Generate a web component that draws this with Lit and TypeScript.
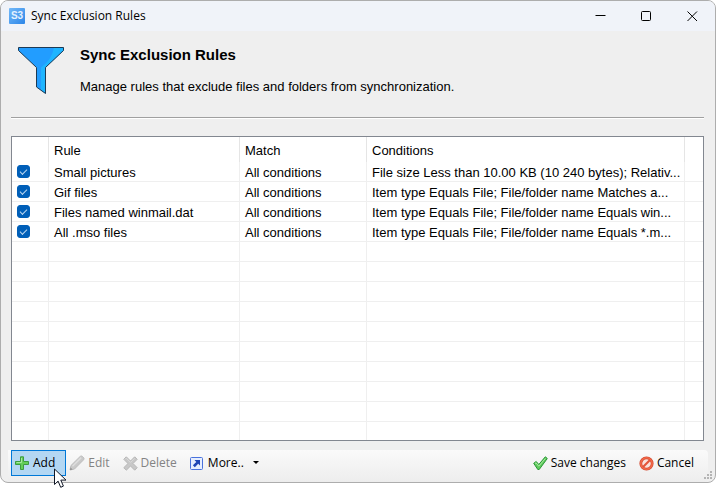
import { LitElement, html, css, svg } from "lit";
import { customElement, state } from "lit/decorators.js";

interface Rule {
  enabled: boolean;
  name: string;
  match: string;
  conditions: string;
}

const EMPTY_ROWS = 10;

const icons = {
  add: svg`<path d="M5.500 .8h3v4.700h5v3h-5v5h-3v-5h-5v-3h5z" fill="#63cf58" stroke="#3d9c40" stroke-linejoin="round"/><path d="M6.500 2v4.500H1.500" fill="none" stroke="#a5e89b"/>`,
  edit: svg`<path d="M1 15l1-4.500L11.200 1.400q1-.9 2.200 0l1.200 1.200q.9 1.200 0 2.200L5.500 14z" fill="#c9c9c9" stroke="#bcbcbc"/><path d="M3.500 11.200L12.200 2.600" stroke="#dedede" stroke-width="1.500"/><path d="M1 15l.6-2.500 1.900 1.900z" fill="#8d8d8d"/>`,
  remove: svg`<path d="M3.300 .8L7.500 5 11.700 .8l2.500 2.500-4.200 4.200 4.200 4.200-2.500 2.500L7.500 10l-4.200 4.200L.8 11.700 5 7.500 .8 3.300z" fill="#c8c8c8" stroke="#b6b6b6"/><path d="M2.200 3.300l1.100-1.100 4.200 4.200 4.200-4.200" fill="none" stroke="#dadada"/>`,
  more: svg`<rect x=".5" y=".5" width="12" height="12" rx="1" fill="#e6eefe" stroke="#4a72dc"/><path d="M4.500 3H10v5.500L8.200 6.800 4.800 10.200 2.900 8.300 6.300 4.900z" fill="#1f46b5"/>`,
  save: svg`<path d="M.7 7.300l2.500-1.800 2.600 3L12.300.8l2 1.700L6.200 13.500 4.800 13.500z" fill="#5fca5c" stroke="#2a9636"/><path d="M2 7.500l1-.7 2.800 3.400 6.600-7.800" fill="none" stroke="#a9eca0"/>`,
  cancel: svg`<circle cx="7.500" cy="7.500" r="5.700" fill="#fbe3dc" stroke="#d2492f" stroke-width="2.800"/><circle cx="7.500" cy="7.500" r="5.700" fill="none" stroke="#f2694a" stroke-width="1.600"/><path d="M4 11L11 4" stroke="#e4553a" stroke-width="2.200"/>`,
};

@customElement("app-root")
export class AppRoot extends LitElement {
  @state() private rules: Rule[] = [
    { enabled: true, name: "Small pictures", match: "All conditions", conditions: "File size Less than 10.00 KB (10 240 bytes); Relativ..." },
    { enabled: true, name: "Gif files", match: "All conditions", conditions: "Item type Equals File; File/folder name Matches a..." },
    { enabled: true, name: "Files named winmail.dat", match: "All conditions", conditions: "Item type Equals File; File/folder name Equals win..." },
    { enabled: true, name: "All .mso files", match: "All conditions", conditions: "Item type Equals File; File/folder name Equals *.m..." },
  ];

  static styles = css`
    :host {
      display: block;
      font: 13px/16px "Liberation Sans", Arial, sans-serif;
      color: #000;
      background: #fff;
    }
    * { box-sizing: border-box; }
    svg { display: block; flex: none; }
    button {
      appearance: none;
      margin: 0;
      padding: 0;
      border: 0;
      background: none;
      color: inherit;
      font: inherit;
    }
    .window {
      position: relative;
      border: 1px solid #adadad;
      border-radius: 8px;
      background: #efefef;
      overflow: hidden;
    }
    .ui { font: 12px/16px "Segoe UI", "Open Sans", "Noto Sans", sans-serif; }
    .titlebar {
      display: flex;
      align-items: center;
      height: 30px;
      padding-left: 8px;
      background: #f0f3f9;
    }
    .title { flex: 1; margin-left: 6px; }
    .caption {
      display: grid;
      place-items: center;
      width: 46px;
      height: 30px;
    }
    .header {
      display: flex;
      gap: 16px;
      margin: 0 11px 0 10px;
      padding: 16px 0 22px 7px;
      border-bottom: 1px solid #a0a0a0;
      box-shadow: 0 1px #fff;
    }
    h1 { margin: 0 0 16px; font-size: 15px; line-height: 16px; }
    p { margin: 0; }
    .list {
      margin: 18px 11px 0 10px;
      border: 1px solid #828790;
      background: #fff;
    }
    table {
      width: 100%;
      table-layout: fixed;
      border-collapse: separate;
      border-spacing: 0;
    }
    .c-check { width: 37px; }
    .c-rule { width: 191px; }
    .c-match { width: 127px; }
    .c-rest { width: 18px; }
    th, td {
      height: 20px;
      padding: 2px 0 0 5px;
      border-right: 1px solid #efefef;
      border-bottom: 1px solid #efefef;
      text-align: left;
      font-weight: normal;
      overflow: hidden;
      white-space: nowrap;
      text-overflow: ellipsis;
    }
    th { height: 25px; border-bottom: 0; border-right-color: #e5e5e5; }
    td:first-child { padding-top: 0; }
    th:last-child, td:last-child { border-right: 0; }
    tr:last-child td { height: 18px; border-bottom: 0; }
    input {
      appearance: none;
      display: grid;
      place-items: center;
      width: 13px;
      height: 13px;
      margin: 0;
      border: 1px solid #868686;
      border-radius: 3px;
    }
    input:checked { border-color: #005fb8; background: #005fb8; }
    input:checked::after {
      content: "";
      width: 6px;
      height: 3px;
      margin-bottom: 2px;
      border: solid #b9d6f0;
      border-width: 0 0 1px 1px;
      transform: rotate(-45deg);
    }
    .toolbar {
      display: flex;
      align-items: flex-start;
      height: 32px;
      margin: 9px 7px 0;
      padding: 0 4px 0 3px;
      border-radius: 0 4px 4px 0;
      background: linear-gradient(#fafafa, #ededed);
    }
    .tool {
      display: flex;
      align-items: center;
      gap: 3px;
      height: 26px;
      padding: 0 9px 0 2px;
      border: 1px solid transparent;
      white-space: nowrap;
    }
    .tool:disabled { color: #838383; }
    .hot { padding: 0 10px 0 3px; border-color: #0078d7; background: #b3d7f3; }
    .menu { gap: 5px; }
    .arrow { margin-left: 4px; }
    .spacer { flex: 1; }
    .grip { position: absolute; right: 1px; bottom: 1px; }
    .pointer { position: absolute; left: 54px; top: 468px; }
  `;

  private toggle(index: number, event: Event) {
    const enabled = (event.target as HTMLInputElement).checked;
    this.rules = this.rules.map((r, i) => (i === index ? { ...r, enabled } : r));
  }

  private icon(name: keyof typeof icons, size = 15) {
    return html`<svg width=${size} height=${size} viewBox="0 0 ${size} ${size}" aria-hidden="true">${icons[name]}</svg>`;
  }

  render() {
    return html`
      <main class="window">
        <div class="titlebar ui">
          <svg width="16" height="16" viewBox="0 0 16 16" aria-hidden="true">
            <defs><linearGradient id="logo" x1="0" y1="0" x2="1" y2="1"><stop stop-color="#72b8f8" /><stop offset="1" stop-color="#2c86e8" /></linearGradient></defs>
            <rect width="16" height="16" rx="1" fill="url(#logo)" />
            <text x="8" y="11" text-anchor="middle" font-family="Liberation Sans" font-weight="bold" font-size="10" fill="#e4f1ff">S3</text>
          </svg>
          <span class="title">Sync Exclusion Rules</span>
          <button class="caption" aria-label="Minimize"><svg width="11" height="11"><path d="M.5 4.500h10" stroke="#000" /></svg></button>
          <button class="caption" aria-label="Maximize"><svg width="11" height="11"><rect x=".5" y=".5" width="9" height="9" rx="1" fill="none" stroke="#000" /></svg></button>
          <button class="caption" aria-label="Close"><svg width="11" height="11"><path d="M.5 .5l9.500 9.500M10 .5L.5 10" stroke="#000" /></svg></button>
        </div>

        <header class="header">
          <svg width="46" height="48" viewBox="0 0 46 48" aria-hidden="true">
            <path d="M.5 .5h45v3L27.500 20.500v26L18.500 40V20.500L.5 3.500z" fill="#229dff" />
            <path d="M36 .5h9.500v3L27.500 20.500v26L23 43V20.500q11-8 13-20z" fill="#1fb5ff" />
            <path d="M.5 .5h45v3L27.500 20.500v26L18.500 40V20.500L.5 3.500z" fill="none" stroke="#1c3a55" />
          </svg>
          <div>
            <h1>Sync Exclusion Rules</h1>
            <p>Manage rules that exclude files and folders from synchronization.</p>
          </div>
        </header>

        <div class="list">
          <table>
            <colgroup><col class="c-check" /><col class="c-rule" /><col class="c-match" /><col /><col class="c-rest" /></colgroup>
            <thead><tr><th></th><th>Rule</th><th>Match</th><th>Conditions</th><th></th></tr></thead>
            <tbody>
              ${this.rules.map((r, i) => html`
                <tr>
                  <td><input type="checkbox" id="rule-${i}" .checked=${r.enabled} @change=${(e: Event) => this.toggle(i, e)} /></td>
                  <td><label for="rule-${i}">${r.name}</label></td>
                  <td>${r.match}</td>
                  <td>${r.conditions}</td>
                  <td></td>
                </tr>`)}
              ${Array.from({ length: EMPTY_ROWS }, () => html`<tr><td></td><td></td><td></td><td></td><td></td></tr>`)}
            </tbody>
          </table>
        </div>

        <div class="toolbar ui">
          <button class="tool hot">${this.icon("add")}Add</button>
          <button class="tool" disabled>${this.icon("edit", 16)}Edit</button>
          <button class="tool" disabled>${this.icon("remove")}Delete</button>
          <button class="tool menu">${this.icon("more", 13)}More..<svg class="arrow" width="7" height="4" aria-hidden="true"><path d="M0 0h6L3 3z" /></svg></button>
          <span class="spacer"></span>
          <button class="tool">${this.icon("save")}Save changes</button>
          <button class="tool">${this.icon("cancel")}Cancel</button>
        </div>
        <svg class="grip" width="11" height="11" aria-hidden="true">
          <path d="M7 1h2v2H7zM4 4h2v2H4zM7 4h2v2H7zM1 7h2v2H1zM4 7h2v2H4zM7 7h2v2H7z" fill="#b4b4b4" />
        </svg>
      </main>
      <svg class="pointer" width="13" height="21" viewBox="0 0 13 21" aria-hidden="true">
        <path d="M.5 1v15.500l3.600-3.400 2.600 6.200 2.700-1.200-2.600-6H12z" fill="#fff" stroke="#111827" />
      </svg>
    `;
  }
}
